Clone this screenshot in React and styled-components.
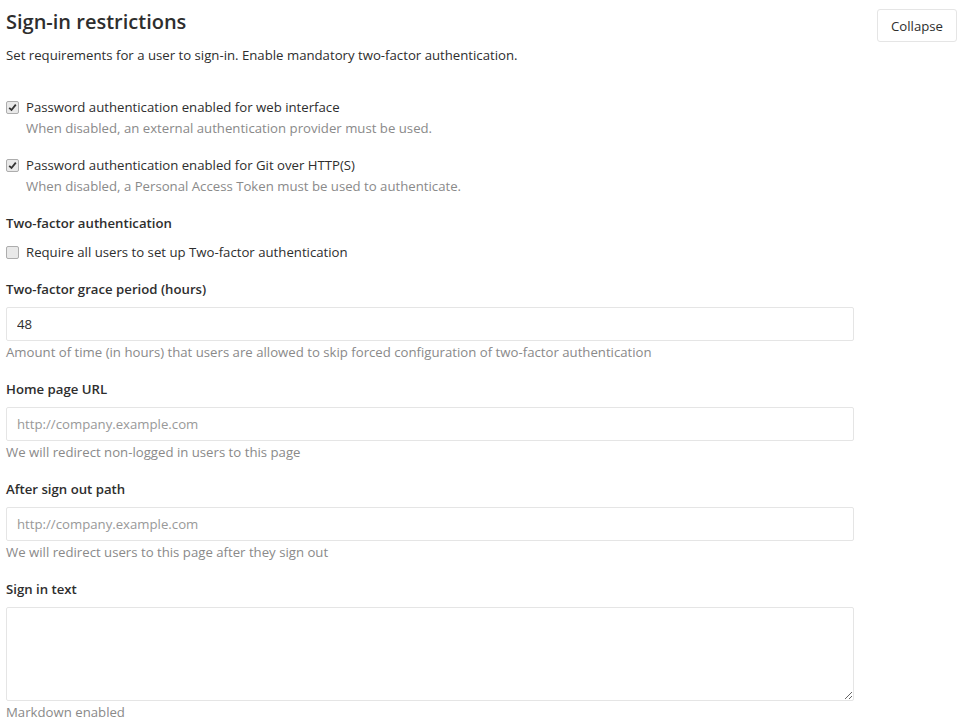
import React from 'react'
import styled, { createGlobalStyle } from 'styled-components'

const Global = createGlobalStyle`
  body {
    margin: 0;
    background: #fff;
    font-family: "Open Sans", "Noto Sans", sans-serif;
    color: #2e2e2e;
    font-size: 13.2px;
  }
  * { box-sizing: border-box; }
`

function Checkbox({ checked, children }) {
  return (
    <CheckLabel>
      <Box>
        {checked && (
          <svg width="9" height="9" viewBox="0 0 9 9">
            <path d="M1.2 4.8 L3.5 7 L7.8 1.6" fill="none" stroke="#333" strokeWidth="1.8" />
          </svg>
        )}
      </Box>
      {children}
    </CheckLabel>
  )
}

function App() {
  return (
    <Page>
      <Global />
      <Header>
        <div>
          <h4>Sign-in restrictions</h4>
          <p>Set requirements for a user to sign-in. Enable mandatory two-factor authentication.</p>
        </div>
        <CollapseButton>Collapse</CollapseButton>
      </Header>
      <Form>
        <CheckRow>
          <Checkbox checked>Password authentication enabled for web interface</Checkbox>
          <Help indent>When disabled, an external authentication provider must be used.</Help>
        </CheckRow>
        <CheckRow>
          <Checkbox checked>Password authentication enabled for Git over HTTP(S)</Checkbox>
          <Help indent>When disabled, a Personal Access Token must be used to authenticate.</Help>
        </CheckRow>
        <Group>
          <Label>Two-factor authentication</Label>
          <CheckRow tight>
            <Checkbox>Require all users to set up Two-factor authentication</Checkbox>
          </CheckRow>
        </Group>
        <Group>
          <Label>Two-factor grace period (hours)</Label>
          <Input defaultValue="48" />
          <Help>Amount of time (in hours) that users are allowed to skip forced configuration of two-factor authentication</Help>
        </Group>
        <Group>
          <Label>Home page URL</Label>
          <Input placeholder="http://company.example.com" />
          <Help>We will redirect non-logged in users to this page</Help>
        </Group>
        <Group>
          <Label>After sign out path</Label>
          <Input placeholder="http://company.example.com" />
          <Help>We will redirect users to this page after they sign out</Help>
        </Group>
        <Group>
          <Label>Sign in text</Label>
          <TextArea />
          <Help>Markdown enabled</Help>
        </Group>
      </Form>
    </Page>
  )
}

const Page = styled.div`
  padding: 0 14px 0 6px;
`

const Header = styled.div`
  display: flex;
  justify-content: space-between;
  align-items: flex-start;
  h4 {
    margin: 9px 0 0;
    font-size: 20px;
    font-weight: 600;
    line-height: 26px;
  }
  p {
    margin: 10px 0 0;
    line-height: 20px;
  }
`

const CollapseButton = styled.button`
  margin-top: 9px;
  height: 33px;
  width: 80px;
  border: 1px solid #e5e5e5;
  border-radius: 3px;
  background: #fff;
  color: #2e2e2e;
  font-family: inherit;
  font-size: 13.2px;
`

const Form = styled.div`
  width: 848px;
  padding-top: 32px;
`

const CheckRow = styled.div`
  margin-bottom: ${p => (p.tight ? '0' : '17px')};
  padding-top: ${p => (p.tight ? '1px' : '0')};
`

const CheckLabel = styled.label`
  display: flex;
  align-items: center;
  line-height: 20px;
`

const Box = styled.span`
  display: flex;
  align-items: center;
  justify-content: center;
  width: 13px;
  height: 13px;
  margin-right: 7px;
  border: 1px solid #adadad;
  border-radius: 2px;
  background: #e9e9e9;
`

const Group = styled.div`
  margin-bottom: 17px;
`

const Label = styled.div`
  font-weight: 600;
  line-height: 20px;
  margin-bottom: 8px;
`

const Help = styled.div`
  color: #8a8a8a;
  line-height: 20px;
  margin-top: 1px;
  padding-left: ${p => (p.indent ? '20px' : '0')};
`

const Input = styled.input`
  display: block;
  width: 100%;
  height: 34px;
  border: 1px solid #e5e5e5;
  border-radius: 2px;
  padding: 0 10px;
  font-family: inherit;
  font-size: 13.2px;
  color: #2e2e2e;
  &::placeholder { color: #999; }
`

const TextArea = styled.textarea`
  display: block;
  width: 100%;
  height: 94px;
  border: 1px solid #e5e5e5;
  border-radius: 2px;
  font-family: inherit;
`

export default App
